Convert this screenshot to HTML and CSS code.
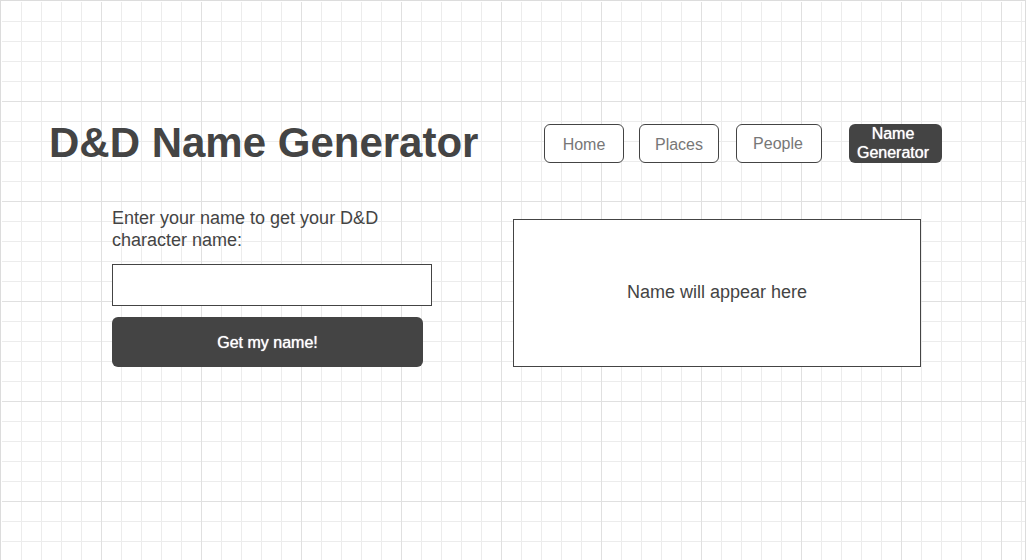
FILE: index.html
```html
<!DOCTYPE html>
<html lang="en">
<head>
  <meta charset="utf-8">
  <meta name="viewport" content="width=device-width, initial-scale=1">
  <title>D&amp;D Name Generator</title>
  <link rel="stylesheet" href="styles.css">
</head>
<body class="page">
  <header class="header">
    <h1 class="title">D&amp;D Name Generator</h1>
    <nav class="nav">
      <a class="nav-link" href="#home">Home</a>
      <a class="nav-link" href="#places">Places</a>
      <a class="nav-link nav-link-people" href="#people">People</a>
      <a class="nav-link nav-link-current" href="#generator" aria-current="page">Name Generator</a>
    </nav>
  </header>
  <main class="main">
    <form class="form">
      <label class="label" for="name">Enter your name to get your D&amp;D character name:</label>
      <input class="input" id="name" type="text">
      <button class="submit" type="button">Get my name!</button>
    </form>
    <output class="result" for="name">Name will appear here</output>
  </main>
</body>
</html>
```
FILE: styles.css
```css
* {
  box-sizing: border-box;
}

.page {
  min-height: 100vh;
  margin: 0;
  padding-top: 119px;
  border: 1px solid #dcdcdc;
  border-bottom: 0;
  box-shadow: inset 1px 1px 0 #fff;
  color: #444;
  font-family: "Liberation Sans", Arial, sans-serif;
  background-color: #fff;
  background-image:
    linear-gradient(to right, #e0e0e0 1px, transparent 1px),
    linear-gradient(to bottom, #e0e0e0 1px, transparent 1px),
    linear-gradient(to right, #ececec 1px, transparent 1px),
    linear-gradient(to bottom, #ececec 1px, transparent 1px);
  background-size: 100px 100px, 100px 100px, 20px 20px, 20px 20px;
  background-position: 1px 1px;
  background-attachment: fixed;
}

.header {
  display: flex;
  align-items: center;
  justify-content: space-between;
  padding: 0 83px 0 48px;
}

.title {
  margin: 0;
  padding-bottom: 2px;
  font-size: 42px;
  line-height: 45px;
  white-space: nowrap;
}

.nav {
  display: flex;
  gap: 15px;
}

.nav-link {
  display: flex;
  align-items: center;
  justify-content: center;
  width: 80px;
  min-height: 39px;
  padding-top: 2px;
  border: 1px solid #444;
  border-radius: 6px;
  background: #fff;
  color: #777;
  font-size: 16px;
  line-height: 19px;
  text-align: center;
  text-decoration: none;
}

.nav-link-people {
  width: 86px;
  margin-left: 2px;
  padding: 0 2px 0 0;
}

.nav-link-current {
  width: 93px;
  margin-left: 12px;
  padding: 0 5px 1px 0;
  border: 0;
  background: #444;
  color: #fff;
  text-shadow: 0 0 1px #fff;
}

.main {
  display: grid;
  grid-template-columns: 320fr 408fr;
  column-gap: 81px;
  align-items: end;
  padding: 40px 104px 40px 111px;
}

.form {
  display: flex;
  flex-direction: column;
}

.label {
  max-width: 290px;
  margin-bottom: 13px;
  font-size: 18px;
  line-height: 22px;
}

.input {
  height: 42px;
  margin-bottom: 11px;
  padding: 0 12px;
  border: 1px solid #444;
  background: #fff;
  color: #444;
  font: inherit;
}

.submit {
  height: 50px;
  margin-right: 9px;
  padding: 2px 0 0;
  border: 0;
  border-radius: 6px;
  background: #444;
  color: #fff;
  font-family: inherit;
  font-size: 16px;
  text-shadow: 0 0 1px #fff;
}

.result {
  display: flex;
  align-items: center;
  justify-content: center;
  min-height: 148px;
  padding-bottom: 2px;
  border: 1px solid #444;
  background: #fff;
  font-size: 18px;
  line-height: 22px;
}
```
